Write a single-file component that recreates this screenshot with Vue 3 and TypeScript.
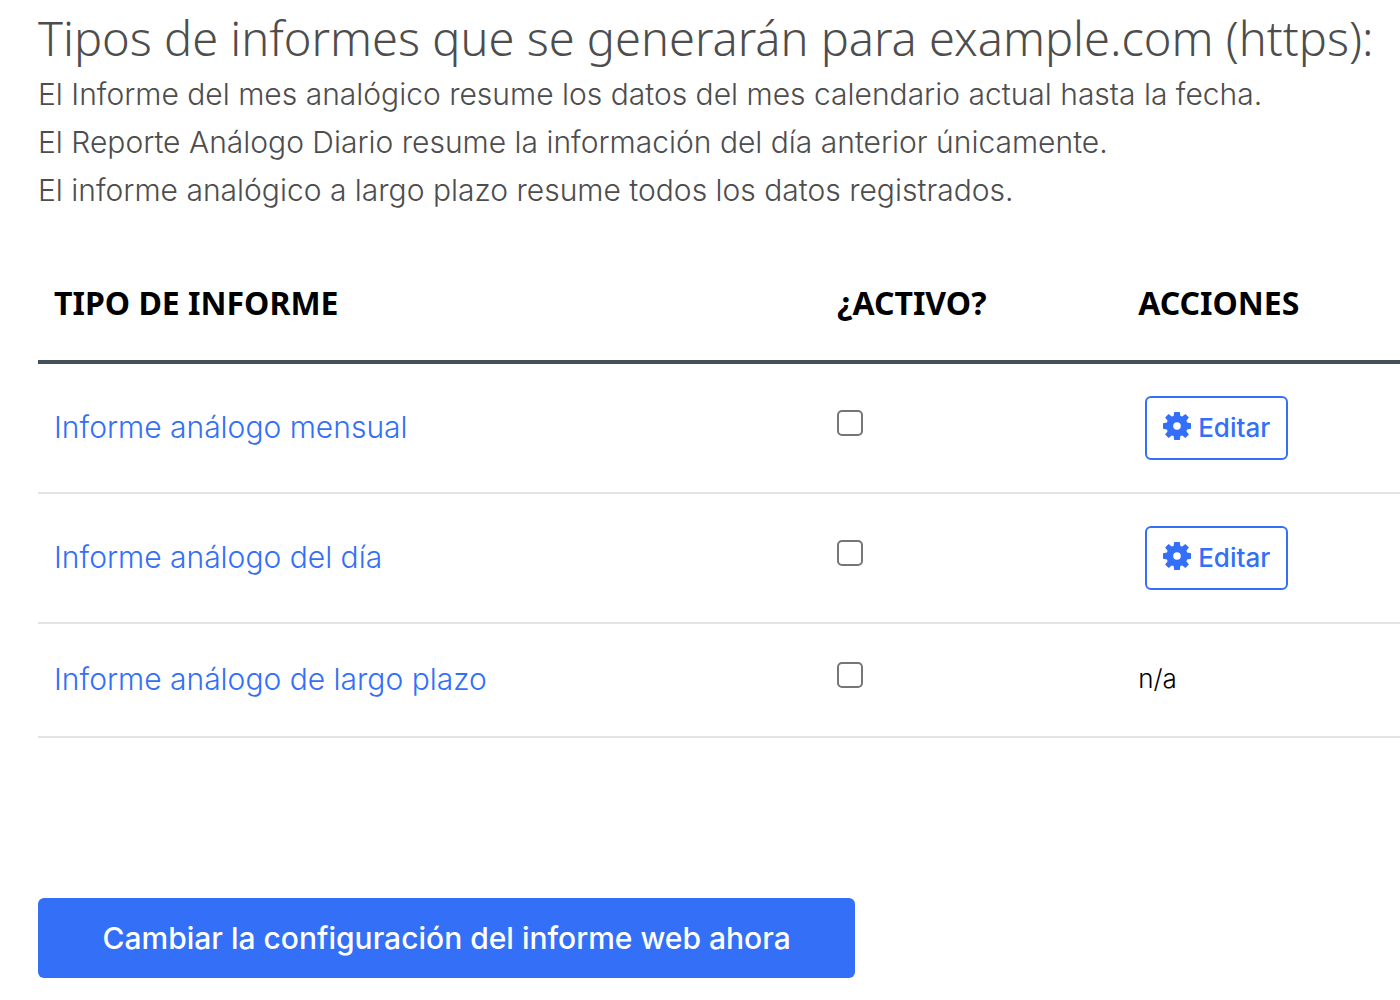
<script setup lang="ts">
import { ref } from 'vue'

interface Report {
  id: string
  name: string
  active: boolean
  editable: boolean
}

const descriptions: string[] = [
  'El Informe del mes analógico resume los datos del mes calendario actual hasta la fecha.',
  'El Reporte Análogo Diario resume la información del día anterior únicamente.',
  'El informe analógico a largo plazo resume todos los datos registrados.',
]

const reports = ref<Report[]>([
  { id: 'monthly', name: 'Informe análogo mensual', active: false, editable: true },
  { id: 'daily', name: 'Informe análogo del día', active: false, editable: true },
  { id: 'long-term', name: 'Informe análogo de largo plazo', active: false, editable: false },
])
</script>

<template>
  <main class="page">
    <h1 class="title">Tipos de informes que se generarán para example.com (https):</h1>
    <p v-for="line in descriptions" :key="line" class="description">{{ line }}</p>

    <form @submit.prevent>
      <table class="reports">
        <thead>
          <tr>
            <th class="col-type" scope="col">TIPO DE INFORME</th>
            <th class="col-active" scope="col">¿ACTIVO?</th>
            <th scope="col">ACCIONES</th>
          </tr>
        </thead>
        <tbody>
          <tr v-for="report in reports" :key="report.id">
            <td>
              <label class="cell-text" :for="report.id"><a class="report-link" href="#">{{ report.name }}</a></label>
            </td>
            <td><input :id="report.id" v-model="report.active" class="check" type="checkbox" /></td>
            <td>
              <button v-if="report.editable" class="edit" type="button">
                <svg class="gear" viewBox="0 0 28 28" aria-hidden="true">
                  <path
                    fill="currentColor"
                    fill-rule="evenodd"
                    d="M11.2 0H16.8L17.4 3.9L19.2 4.6L22.4 2.1L25.9 5.6L23.4 8.8L24.1 10.6L28 11.2V16.8L24.1 17.4L23.4 19.2L25.9 22.4L22.4 25.9L19.2 23.4L17.4 24.1L16.8 28H11.2L10.6 24.1L8.8 23.4L5.6 25.9L2.1 22.4L4.6 19.2L3.9 17.4L0 16.8V11.2L3.9 10.6L4.6 8.8L2.1 5.6L5.6 2.1L8.8 4.6L10.6 3.9ZM14 10.2A3.8 3.8 0 1 0 14 17.8A3.8 3.8 0 1 0 14 10.2Z"
                  />
                </svg>
                Editar
              </button>
              <span v-else class="cell-text unavailable">n/a</span>
            </td>
          </tr>
        </tbody>
      </table>

      <button class="submit" type="submit">Cambiar la configuración del informe web ahora</button>
    </form>
  </main>
</template>

<style>
body {
  margin: 0;
  background: #fff;
}
</style>

<style scoped>
.page {
  padding: 6px 0 22px 38px;
  font-family: Inter, "Liberation Sans", sans-serif;
  font-size: 30px;
  line-height: 48px;
  color: #4d4d4d;
}

.title {
  margin: 0;
  font-family: "Noto Sans", sans-serif;
  font-size: 47px;
  font-weight: 300;
  line-height: 64px;
  white-space: nowrap;
}

.description {
  margin: 0;
  font-weight: 300;
  white-space: nowrap;
}

.reports {
  width: 100%;
  margin-top: 34px;
  border-collapse: separate;
  border-spacing: 0;
  table-layout: fixed;
}

.col-type {
  width: 57.5%;
}

.col-active {
  width: 22.1%;
}

.reports th {
  box-sizing: border-box;
  padding: 31px 16px 33px;
  border-bottom: 4px solid #434f59;
  font-family: "Noto Sans", sans-serif;
  font-size: 32px;
  font-weight: 700;
  text-align: left;
  color: #000;
}

.reports td {
  padding: 32px 16px;
  border-bottom: 2px solid #e1e4e7;
  vertical-align: middle;
}

.cell-text {
  display: block;
  padding-bottom: 2px;
  line-height: 46px;
}

.report-link {
  font-weight: 300;
  color: #346ff8;
  text-decoration: none;
}

.check {
  display: block;
  box-sizing: border-box;
  width: 26px;
  height: 26px;
  margin: 0 0 10px;
  appearance: none;
  border: 2px solid #767676;
  border-radius: 5px;
  background: #fff;
}

.check:checked {
  border-color: #346ff8;
  background: #346ff8;
}

.edit {
  display: flex;
  align-items: center;
  gap: 7px;
  box-sizing: border-box;
  height: 64px;
  margin: 0 0 0 7px;
  padding: 0 16px 2px;
  border: 2px solid #346ff8;
  border-radius: 6px;
  background: #fff;
  font-family: inherit;
  font-size: 26px;
  font-weight: 500;
  color: #346ff8;
  cursor: pointer;
}

.gear {
  width: 28px;
  height: 28px;
  margin-bottom: 2px;
}

.unavailable {
  font-size: 26px;
  font-weight: 300;
  color: #000;
}

.submit {
  display: block;
  width: 60%;
  height: 80px;
  margin-top: 160px;
  padding: 0 16px;
  border: 0;
  border-radius: 6px;
  background: #346ff8;
  font-family: inherit;
  font-size: 30px;
  font-weight: 500;
  color: #fff;
  cursor: pointer;
}
</style>
